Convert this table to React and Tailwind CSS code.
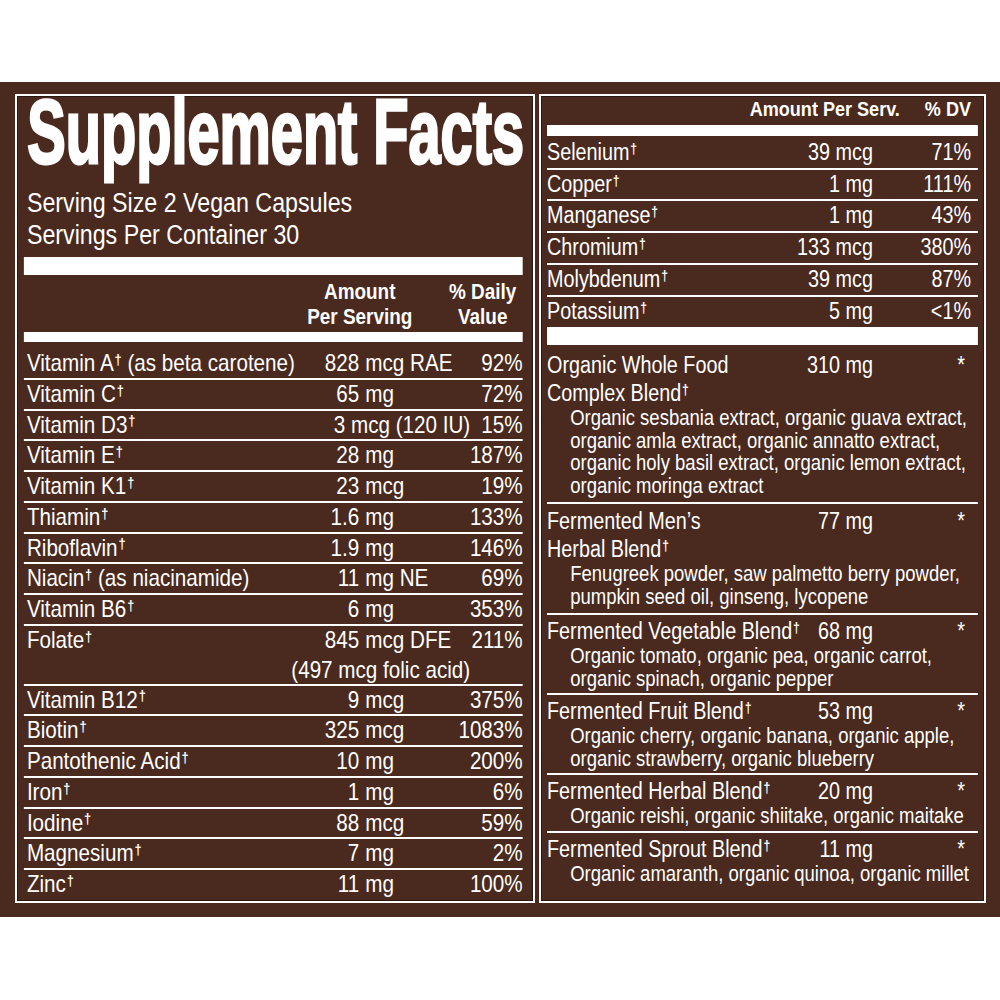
const Dag = () => (
  <span className="relative -top-[0.42em] ml-[1px] text-[0.62em] font-bold leading-none">†</span>
)

const left = [
  { n: 'Vitamin A', s: ' (as beta carotene)', a: '828', u: 'mcg RAE', dv: '92%' },
  { n: 'Vitamin C', a: '65', u: 'mg', dv: '72%' },
  { n: 'Vitamin D3', full: '3 mcg (120 IU)', dv: '15%' },
  { n: 'Vitamin E', a: '28', u: 'mg', dv: '187%' },
  { n: 'Vitamin K1', a: '23', u: 'mcg', dv: '19%' },
  { n: 'Thiamin', a: '1.6', u: 'mg', dv: '133%' },
  { n: 'Riboflavin', a: '1.9', u: 'mg', dv: '146%' },
  { n: 'Niacin', s: ' (as niacinamide)', a: '11', u: 'mg NE', dv: '69%' },
  { n: 'Vitamin B6', a: '6', u: 'mg', dv: '353%' },
  { n: 'Folate', a: '845', u: 'mcg DFE', dv: '211%', sub: '(497 mcg folic acid)' },
  { n: 'Vitamin B12', a: '9', u: 'mcg', dv: '375%' },
  { n: 'Biotin', a: '325', u: 'mcg', dv: '1083%' },
  { n: 'Pantothenic Acid', a: '10', u: 'mg', dv: '200%' },
  { n: 'Iron', a: '1', u: 'mg', dv: '6%' },
  { n: 'Iodine', a: '88', u: 'mcg', dv: '59%' },
  { n: 'Magnesium', a: '7', u: 'mg', dv: '2%' },
  { n: 'Zinc', a: '11', u: 'mg', dv: '100%' },
]

const minerals = [
  ['Selenium', '39 mcg', '71%'],
  ['Copper', '1 mg', '111%'],
  ['Manganese', '1 mg', '43%'],
  ['Chromium', '133 mcg', '380%'],
  ['Molybdenum', '39 mcg', '87%'],
  ['Potassium', '5 mg', '<1%'],
]

const blends = [
  {
    name: ['Organic Whole Food', 'Complex Blend'], amt: '310 mg', pad: 'pt-[6px] pb-[5px]',
    items: ['Organic sesbania extract, organic guava extract,', 'organic amla extract, organic annatto extract,', 'organic holy basil extract, organic lemon extract,', 'organic moringa extract'],
  },
  {
    name: ['Fermented Men’s', 'Herbal Blend'], amt: '77 mg', pad: 'pt-[3px] pb-[5px]',
    items: ['Fenugreek powder, saw palmetto berry powder,', 'pumpkin seed oil, ginseng, lycopene'],
  },
  {
    name: ['Fermented Vegetable Blend'], amt: '68 mg', pad: 'pt-[2px] pb-[3px]',
    items: ['Organic tomato, organic pea, organic carrot,', 'organic spinach, organic pepper'],
  },
  {
    name: ['Fermented Fruit Blend'], amt: '53 mg', pad: 'pt-[2px] pb-[3px]',
    items: ['Organic cherry, organic banana, organic apple,', 'organic strawberry, organic blueberry'],
  },
  {
    name: ['Fermented Herbal Blend'], amt: '20 mg', pad: 'pt-[2px] pb-[3px]',
    items: ['Organic reishi, organic shiitake, organic maitake'],
  },
  {
    name: ['Fermented Sprout Blend'], amt: '11 mg', pad: 'pt-[2px] pb-0',
    items: ['Organic amaranth, organic quinoa, organic millet'],
    last: true,
  },
]

// the label face is a condensed grotesque; Liberation Sans squeezed on x stands in for it
function LeftRow({ r, last }) {
  return (
    <div className={`grid grid-cols-[1fr_70px_116px_74px] pl-[3.5px] leading-[28.75px] ${last ? '' : 'border-b-2 border-white'}`}>
      <div className="whitespace-nowrap">{r.n}<Dag />{r.s}</div>
      {r.full ? (
        <div className="col-span-2 -mr-[13px] text-right whitespace-nowrap">{r.full}</div>
      ) : (
        <>
          <div className="text-right whitespace-nowrap">{r.a}</div>
          <div className="pl-[7px] whitespace-nowrap">{r.u}</div>
        </>
      )}
      <div className="flex justify-end whitespace-nowrap">{r.dv}</div>
      {r.sub && <div className="col-span-3 -mr-[13px] text-right leading-[29px] whitespace-nowrap">{r.sub}</div>}
    </div>
  )
}

export default function App() {
  return (
    <div className="h-[1000px] bg-white pt-[82px] text-white font-['Liberation_Sans',Arial,sans-serif] text-[24px]">
      <div className="flex h-[835px] gap-[4px] bg-[#4a2a1e] pl-[15px] pt-[12px]">
        {/* left panel */}
        <div className="h-[809px] w-[520px] overflow-hidden border-2 border-white shadow-[inset_0_0_0_1px_#2b1811]">
          <div className="w-[600px] origin-top-left scale-x-[0.86] pl-[8px] pr-[12px]">
            <h1 className="ml-[4px] w-max origin-left scale-x-[0.745] whitespace-nowrap text-[90px] font-bold leading-[72px] [-webkit-text-stroke:3px_#fff]">
              Supplement Facts
            </h1>
            <div className="mt-[19px] pl-[3.5px] text-[27px] leading-[32px]">
              <div>Serving Size 2 Vegan Capsules</div>
              <div>Servings Per Container 30</div>
            </div>
            <div className="mt-[6px] h-[18px] bg-white" />
            <div className="mt-[4px] flex justify-end text-[22px] font-bold leading-[25px]">
              <div className="w-[151px] text-center">Amount<br />Per Serving</div>
              <div className="ml-[21px] w-[93px] text-center">% Daily<br />Value</div>
            </div>
            <div className="mt-[3px] h-[10px] bg-white" />
            <div className="pt-[7px]">
              {left.map((r, i) => (
                <LeftRow key={r.n} r={r} last={i === left.length - 1} />
              ))}
            </div>
          </div>
        </div>

        {/* right panel */}
        <div className="h-[809px] w-[447px] overflow-hidden border-2 border-white shadow-[inset_0_0_0_1px_#2b1811]">
          <div className="w-[514px] origin-top-left scale-x-[0.86] text-[23px]">
            <div className="flex justify-end pr-[14px] text-[21px] font-bold leading-[25px]">
              <span>Amount Per Serv.</span>
              <span className="ml-[29px]">% DV</span>
            </div>
            <div className="ml-[7px] mr-[6px]">
              <div className="mt-[4px] h-[11px] bg-white" />
              <div className="pt-[2px]">
                {minerals.map(([n, a, dv], i) => (
                  <div key={n} className={`grid grid-cols-[1fr_auto_114px] pr-[8px] leading-[29.7px] ${i < minerals.length - 1 ? 'border-b-2 border-white' : ''}`}>
                    <div className="whitespace-nowrap">{n}<Dag /></div>
                    <div className="text-right whitespace-nowrap">{a}</div>
                    <div className="text-right">{dv}</div>
                  </div>
                ))}
              </div>
              <div className="mt-[1px] h-[18px] bg-white" />
              {blends.map(b => (
                <div key={b.amt} className={`${b.pad} ${b.last ? '' : 'border-b-2 border-white'}`}>
                  <div className="grid grid-cols-[1fr_auto_114px] pr-[8px] leading-[28px]">
                    <div className="whitespace-nowrap">
                      {b.name.map((l, i) => (
                        <div key={l}>{l}{i === b.name.length - 1 && <Dag />}</div>
                      ))}
                    </div>
                    <div className="text-right whitespace-nowrap">{b.amt}</div>
                    <div className="pr-[7px] text-right">*</div>
                  </div>
                  <div className="pl-[27px] text-[21.5px] leading-[22.5px] whitespace-nowrap">
                    {b.items.map(t => <div key={t}>{t}</div>)}
                  </div>
                </div>
              ))}
            </div>
          </div>
        </div>
      </div>
    </div>
  )
}
